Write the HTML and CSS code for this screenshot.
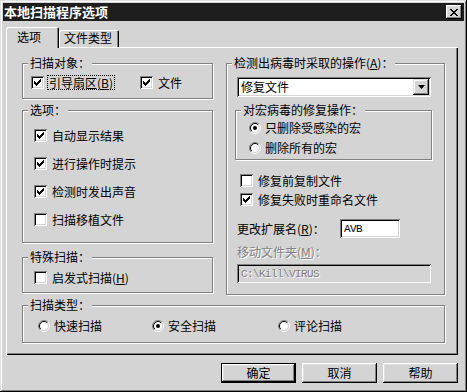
FILE: index.html
```html
<!DOCTYPE html>
<html lang="zh-CN">
<head>
    <meta charset="UTF-8">
    <title>本地扫描程序选项</title>
    <link rel="stylesheet" href="styles.css">
</head>
<body>
    <div class="window">
        <div class="titlebar">
            <span class="title">本地扫描程序选项</span>
            <span class="close-btn">
                <svg width="8" height="7" viewBox="0 0 8 7"><path d="M0 0h2v1h-2zM6 0h2v1h-2zM1 1h2v1h-2zM5 1h2v1h-2zM2 2h4v1h-4zM3 3h2v1h-2zM2 4h4v1h-4zM1 5h2v1h-2zM5 5h2v1h-2zM0 6h2v1h-2zM6 6h2v1h-2z"/></svg>
            </span>
        </div>

        <div class="tabs">
            <div class="tab tab-active">选项</div>
            <div class="tab">文件类型</div>
        </div>

        <div class="panel">
            <div class="columns">
                <div class="col-left">
                    <fieldset class="group">
                        <legend>扫描对象：</legend>
                        <div class="target-body">
                            <div class="check opt-boot">
                                <span class="cb"><svg width="13" height="13" viewBox="0 0 13 13"><path d="M3 5h1v3h-1zM4 6h1v3h-1zM5 7h1v3h-1zM6 6h1v3h-1zM7 5h1v3h-1zM8 4h1v3h-1zM9 3h1v3h-1z"/></svg></span>
                                <span class="focus">引导扇区(<u>B</u>)</span>
                            </div>
                            <div class="check">
                                <span class="cb"><svg width="13" height="13" viewBox="0 0 13 13"><path d="M3 5h1v3h-1zM4 6h1v3h-1zM5 7h1v3h-1zM6 6h1v3h-1zM7 5h1v3h-1zM8 4h1v3h-1zM9 3h1v3h-1z"/></svg></span>
                                <span>文件</span>
                            </div>
                        </div>
                    </fieldset>

                    <fieldset class="group group-options">
                        <legend>选项：</legend>
                        <div class="options-body">
                            <div class="check">
                                <span class="cb"><svg width="13" height="13" viewBox="0 0 13 13"><path d="M3 5h1v3h-1zM4 6h1v3h-1zM5 7h1v3h-1zM6 6h1v3h-1zM7 5h1v3h-1zM8 4h1v3h-1zM9 3h1v3h-1z"/></svg></span>
                                <span>自动显示结果</span>
                            </div>
                            <div class="check">
                                <span class="cb"><svg width="13" height="13" viewBox="0 0 13 13"><path d="M3 5h1v3h-1zM4 6h1v3h-1zM5 7h1v3h-1zM6 6h1v3h-1zM7 5h1v3h-1zM8 4h1v3h-1zM9 3h1v3h-1z"/></svg></span>
                                <span>进行操作时提示</span>
                            </div>
                            <div class="check">
                                <span class="cb"><svg width="13" height="13" viewBox="0 0 13 13"><path d="M3 5h1v3h-1zM4 6h1v3h-1zM5 7h1v3h-1zM6 6h1v3h-1zM7 5h1v3h-1zM8 4h1v3h-1zM9 3h1v3h-1z"/></svg></span>
                                <span>检测时发出声音</span>
                            </div>
                            <div class="check">
                                <span class="cb"></span>
                                <span>扫描移植文件</span>
                            </div>
                        </div>
                    </fieldset>

                    <fieldset class="group group-special">
                        <legend>特殊扫描：</legend>
                        <div class="special-body">
                            <div class="check">
                                <span class="cb"></span>
                                <span>启发式扫描(<u>H</u>)</span>
                            </div>
                        </div>
                    </fieldset>
                </div>

                <fieldset class="group group-action">
                    <legend>检测出病毒时采取的操作(<u>A</u>)：</legend>
                    <div class="action-body">
                        <div class="combo">
                            <span class="combo-text">修复文件</span>
                            <span class="combo-btn">
                                <svg width="7" height="4" viewBox="0 0 7 4"><path d="M0 0h7l-3.5 4z"/></svg>
                            </span>
                        </div>

                        <fieldset class="group group-macro">
                            <legend>对宏病毒的修复操作：</legend>
                            <div class="macro-body">
                                <div class="radio">
                                    <svg class="rb" width="12" height="12" viewBox="0 0 12 12">
                                        <circle cx="6" cy="6" r="4.5" fill="#fff"/>
                                        <path d="M2.1 9.9A5.5 5.5 0 0 1 9.9 2.1" stroke="#808080" fill="none"/>
                                        <path d="M9.9 2.1A5.5 5.5 0 0 1 2.1 9.9" stroke="#fff" fill="none"/>
                                        <path d="M2.8 9.2A4.5 4.5 0 0 1 9.2 2.8" stroke="#000" fill="none"/>
                                        <path d="M9.2 2.8A4.5 4.5 0 0 1 2.8 9.2" stroke="#d4d4d4" fill="none"/>
                                        <circle cx="6" cy="6" r="2"/>
                                    </svg>
                                    <span>只删除受感染的宏</span>
                                </div>
                                <div class="radio">
                                    <svg class="rb" width="12" height="12" viewBox="0 0 12 12">
                                        <circle cx="6" cy="6" r="4.5" fill="#fff"/>
                                        <path d="M2.1 9.9A5.5 5.5 0 0 1 9.9 2.1" stroke="#808080" fill="none"/>
                                        <path d="M9.9 2.1A5.5 5.5 0 0 1 2.1 9.9" stroke="#fff" fill="none"/>
                                        <path d="M2.8 9.2A4.5 4.5 0 0 1 9.2 2.8" stroke="#000" fill="none"/>
                                        <path d="M9.2 2.8A4.5 4.5 0 0 1 2.8 9.2" stroke="#d4d4d4" fill="none"/>
                                    </svg>
                                    <span>删除所有的宏</span>
                                </div>
                            </div>
                        </fieldset>

                        <div class="fix-checks">
                            <div class="check">
                                <span class="cb"></span>
                                <span>修复前复制文件</span>
                            </div>
                            <div class="check">
                                <span class="cb"><svg width="13" height="13" viewBox="0 0 13 13"><path d="M3 5h1v3h-1zM4 6h1v3h-1zM5 7h1v3h-1zM6 6h1v3h-1zM7 5h1v3h-1zM8 4h1v3h-1zM9 3h1v3h-1z"/></svg></span>
                                <span>修复失败时重命名文件</span>
                            </div>
                        </div>

                        <div class="ext-row">
                            <span class="ext-label">更改扩展名(<u>R</u>)：</span>
                            <span class="field ext-field">AVB</span>
                        </div>

                        <div class="move-label">移动文件夹(<u>M</u>)：</div>
                        <div class="field move-field">C:\Kill\VIRUS</div>
                    </div>
                </fieldset>
            </div>

            <fieldset class="group group-type">
                <legend>扫描类型：</legend>
                <div class="type-body">
                    <div class="radio type-quick">
                        <svg class="rb" width="12" height="12" viewBox="0 0 12 12">
                            <circle cx="6" cy="6" r="4.5" fill="#fff"/>
                            <path d="M2.1 9.9A5.5 5.5 0 0 1 9.9 2.1" stroke="#808080" fill="none"/>
                            <path d="M9.9 2.1A5.5 5.5 0 0 1 2.1 9.9" stroke="#fff" fill="none"/>
                            <path d="M2.8 9.2A4.5 4.5 0 0 1 9.2 2.8" stroke="#000" fill="none"/>
                            <path d="M9.2 2.8A4.5 4.5 0 0 1 2.8 9.2" stroke="#d4d4d4" fill="none"/>
                        </svg>
                        <span>快速扫描</span>
                    </div>
                    <div class="radio type-safe">
                        <svg class="rb" width="12" height="12" viewBox="0 0 12 12">
                            <circle cx="6" cy="6" r="4.5" fill="#fff"/>
                            <path d="M2.1 9.9A5.5 5.5 0 0 1 9.9 2.1" stroke="#808080" fill="none"/>
                            <path d="M9.9 2.1A5.5 5.5 0 0 1 2.1 9.9" stroke="#fff" fill="none"/>
                            <path d="M2.8 9.2A4.5 4.5 0 0 1 9.2 2.8" stroke="#000" fill="none"/>
                            <path d="M9.2 2.8A4.5 4.5 0 0 1 2.8 9.2" stroke="#d4d4d4" fill="none"/>
                            <circle cx="6" cy="6" r="2"/>
                        </svg>
                        <span>安全扫描</span>
                    </div>
                    <div class="radio">
                        <svg class="rb" width="12" height="12" viewBox="0 0 12 12">
                            <circle cx="6" cy="6" r="4.5" fill="#fff"/>
                            <path d="M2.1 9.9A5.5 5.5 0 0 1 9.9 2.1" stroke="#808080" fill="none"/>
                            <path d="M9.9 2.1A5.5 5.5 0 0 1 2.1 9.9" stroke="#fff" fill="none"/>
                            <path d="M2.8 9.2A4.5 4.5 0 0 1 9.2 2.8" stroke="#000" fill="none"/>
                            <path d="M9.2 2.8A4.5 4.5 0 0 1 2.8 9.2" stroke="#d4d4d4" fill="none"/>
                        </svg>
                        <span>评论扫描</span>
                    </div>
                </div>
            </fieldset>
        </div>

        <div class="buttons">
            <div class="btn btn-default">确定</div>
            <div class="btn">取消</div>
            <div class="btn">帮助</div>
        </div>
    </div>
</body>
</html>
```

FILE: styles.css
```css
* {
    box-sizing: border-box;
}
body {
    margin: 0;
    background: #d4d4d4;
    font-family: "Noto Sans CJK SC", "Noto Sans", sans-serif;
    font-size: 12px;
    line-height: 14px;
    color: #000;
}
u {
    text-decoration: underline;
}

/* window frame */
.window {
    width: 467px;
    height: 392px;
    padding: 3px;
    background: #d4d4d4;
    box-shadow: inset -1px -1px #000, inset 1px 1px #dfdfdf,
                inset -2px -2px #808080, inset 2px 2px #fff;
}
.titlebar {
    height: 18px;
    display: flex;
    align-items: center;
    justify-content: space-between;
    padding: 0 2px 0 1px;
    background: #1e1e1e;
    color: #fff;
}
.title {
    font-size: 13px;
    font-weight: bold;
    line-height: 16px;
}
.close-btn {
    width: 16px;
    height: 14px;
    display: flex;
    align-items: center;
    justify-content: center;
    background: #d4d4d4;
    box-shadow: inset -1px -1px #000, inset 1px 1px #fff,
                inset -2px -2px #808080, inset 2px 2px #dfdfdf;
}

/* tabs */
.tabs {
    display: flex;
    align-items: flex-end;
    padding: 6px 0 0 3px;
}
.tab {
    width: 60px;
    height: 17px;
    padding: 1px 0 0 5px;
    background: #d4d4d4;
    border-radius: 2px 2px 0 0;
    box-shadow: inset 1px 1px #fff, inset -1px 0 #000, inset -2px 0 #808080;
}
.tab-active {
    position: relative;
    z-index: 1;
    width: 53px;
    height: 21px;
    margin-bottom: -1px;
    padding: 3px 0 0 11px;
}
.panel {
    height: 308px;
    margin: 0 6px 0 3px;
    padding: 9px 0 0 16px;
    box-shadow: inset 1px 1px #fff, inset -1px -1px #000, inset -2px -2px #808080;
}
.columns {
    display: flex;
    align-items: flex-start;
    gap: 13px;
}
.col-left {
    width: 191px;
    display: flex;
    flex-direction: column;
}

/* group boxes */
.group {
    margin: 0;
    padding: 0;
    min-width: 0;
    border: 1px solid #808080;
    box-shadow: inset 1px 1px #fff, 1px 1px #fff;
}
.group legend {
    margin-left: 5px;
    padding: 0 2px;
    line-height: 14px;
    background: #d4d4d4;
}
.group-options {
    margin-top: 4px;
}
.group-special {
    margin-top: 7px;
}
.group-action {
    width: 219px;
}
.group-type {
    width: 423px;
    margin-top: 3px;
}

/* checkboxes and radios */
.check {
    display: flex;
    align-items: center;
    gap: 5px;
    height: 15px;
    white-space: nowrap;
}
.cb {
    width: 13px;
    height: 13px;
    flex: none;
    background: #fff;
    box-shadow: inset 1px 1px #808080, inset -1px -1px #fff,
                inset 2px 2px #000, inset -2px -2px #d4d4d4;
}
.cb svg {
    display: block;
}
.radio {
    display: flex;
    align-items: center;
    gap: 4px;
    height: 14px;
    white-space: nowrap;
}
.rb {
    flex: none;
    display: block;
}
.focus {
    height: 15px;
    padding: 0 1px;
    line-height: 13px;
    border: 1px dotted #000;
}

.target-body {
    display: flex;
    padding: 5px 0 8px 8px;
}
.opt-boot {
    width: 109px;
    gap: 3px;
}
.options-body {
    display: flex;
    flex-direction: column;
    gap: 13px;
    padding: 11px 0 15px 11px;
}
.special-body {
    padding: 6px 0 7px 11px;
}

/* right side */
.action-body {
    display: flex;
    flex-direction: column;
    padding: 7px 0 11px 10px;
}
.combo {
    width: 194px;
    height: 20px;
    display: flex;
    align-items: center;
    padding: 2px;
    background: #fff;
    box-shadow: inset 1px 1px #808080, inset -1px -1px #fff,
                inset 2px 2px #000, inset -2px -2px #d4d4d4;
}
.combo-text {
    flex: 1;
    padding-left: 2px;
}
.combo-btn {
    width: 16px;
    height: 16px;
    display: flex;
    align-items: center;
    justify-content: center;
    background: #d4d4d4;
    box-shadow: inset -1px -1px #000, inset 1px 1px #dfdfdf,
                inset -2px -2px #808080, inset 2px 2px #fff;
}
.group-macro {
    width: 197px;
    margin: 6px 0 0 -2px;
}
.macro-body {
    display: flex;
    flex-direction: column;
    gap: 6px;
    padding: 4px 0 4px 13px;
}
.fix-checks {
    display: flex;
    flex-direction: column;
    gap: 4px;
    margin: 13px 0 0 3px;
}
.ext-row {
    display: flex;
    align-items: center;
    margin-top: 12px;
}
.ext-label {
    width: 103px;
}
.field {
    height: 19px;
    display: flex;
    align-items: center;
    padding: 1px 0 0 4px;
    background: #fff;
    font-family: "Liberation Mono", monospace;
    font-size: 11px;
    letter-spacing: -0.6px;
    box-shadow: inset 1px 1px #808080, inset -1px -1px #fff,
                inset 2px 2px #000, inset -2px -2px #d4d4d4;
}
.ext-field {
    width: 60px;
}
.move-label {
    margin-top: 7px;
    color: #808080;
    text-shadow: 1px 1px #fff;
}
.move-field {
    width: 194px;
    margin-top: 5px;
    background: #d4d4d4;
    color: #808080;
    text-shadow: 1px 1px #fff;
}

/* scan type */
.type-body {
    display: flex;
    padding: 7px 0 9px 15px;
}
.type-quick {
    width: 114px;
}
.type-safe {
    width: 126px;
}

/* buttons */
.buttons {
    display: flex;
    justify-content: flex-end;
    gap: 6px;
    margin-top: 8px;
    padding-right: 6px;
}
.btn {
    width: 75px;
    height: 20px;
    display: flex;
    align-items: center;
    justify-content: center;
    background: #d4d4d4;
    box-shadow: inset -1px -1px #000, inset 1px 1px #fff,
                inset -2px -2px #808080, inset 2px 2px #dfdfdf;
}
.btn-default {
    border: 1px solid #000;
}
```
